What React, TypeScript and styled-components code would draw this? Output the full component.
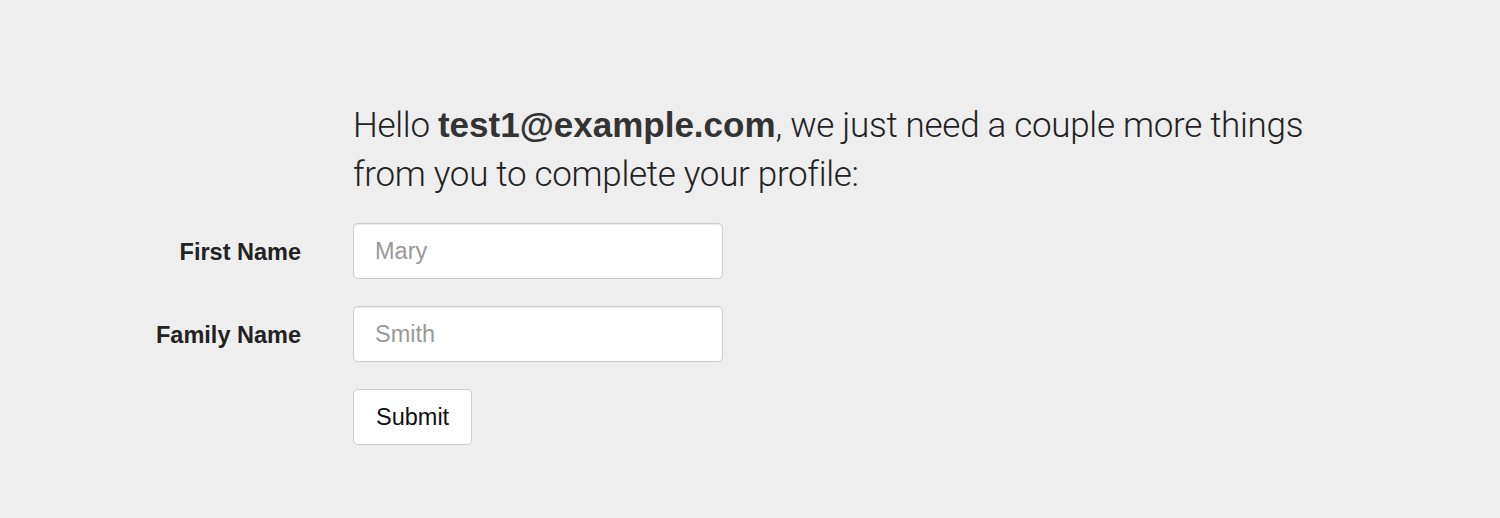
import React from 'react'
import styled, { createGlobalStyle } from 'styled-components'

const GlobalStyle = createGlobalStyle`
    html, body {
        margin:0;
        padding:0;
        background:#eeeeee;
        color:#333;
        font-family:"Liberation Sans", Arial, sans-serif;
    }
`

const Page = styled.div`
    padding:100px 0px 0px 0px;
    min-height:518px;
    box-sizing:border-box;
`

const Form = styled.form`
    display:grid;
    grid-template-columns:301px 370px;
    column-gap:52px;
    row-gap:27px;
    align-items:center;
`

const Intro = styled.p`
    grid-column:2;
    width:990px;
    margin:0px 0px -3px 0px;
    font-family:Roboto, "Liberation Sans", sans-serif;
    font-weight:300;
    font-size:35px;
    line-height:49px;
    letter-spacing:-0.3px;
    color:#222;
`

const Email = styled.strong`
    font-family:"Liberation Sans", Arial, sans-serif;
    font-weight:700;
    letter-spacing:0px;
    color:#333;
`

const Label = styled.label`
    grid-column:1;
    text-align:right;
    font-weight:700;
    font-size:23.5px;
    color:#222;
    padding-top:3px;
`

const Input = styled.input`
    grid-column:2;
    box-sizing:border-box;
    width:370px;
    height:56px;
    padding:0px 21px;
    border:1px solid #ccc;
    border-radius:5px;
    background:#fff;
    box-shadow:inset 0 1px 1px rgba(0,0,0,0.075);
    font-family:"Liberation Sans", Arial, sans-serif;
    font-size:23.5px;
    color:#333;
    &::placeholder{
        color:#999;
    }
`

const Submit = styled.button`
    grid-column:2;
    justify-self:start;
    box-sizing:border-box;
    height:56px;
    padding:0px 22px;
    border:1px solid #ccc;
    border-radius:5px;
    background:#fff;
    font-family:"Liberation Sans", Arial, sans-serif;
    font-size:23.5px;
    color:#111;
`

const App = () => {
    return (
        <Page>
            <GlobalStyle />
            <Form onSubmit={e => e.preventDefault()}>
                <Intro>
                    Hello <Email>test1@example.com</Email>, we just need a couple more things from you to complete your profile:
                </Intro>
                <Label htmlFor="first">First Name</Label>
                <Input id="first" placeholder="Mary" />
                <Label htmlFor="family">Family Name</Label>
                <Input id="family" placeholder="Smith" />
                <Submit type="submit">Submit</Submit>
            </Form>
        </Page>
    )
}

export default App
